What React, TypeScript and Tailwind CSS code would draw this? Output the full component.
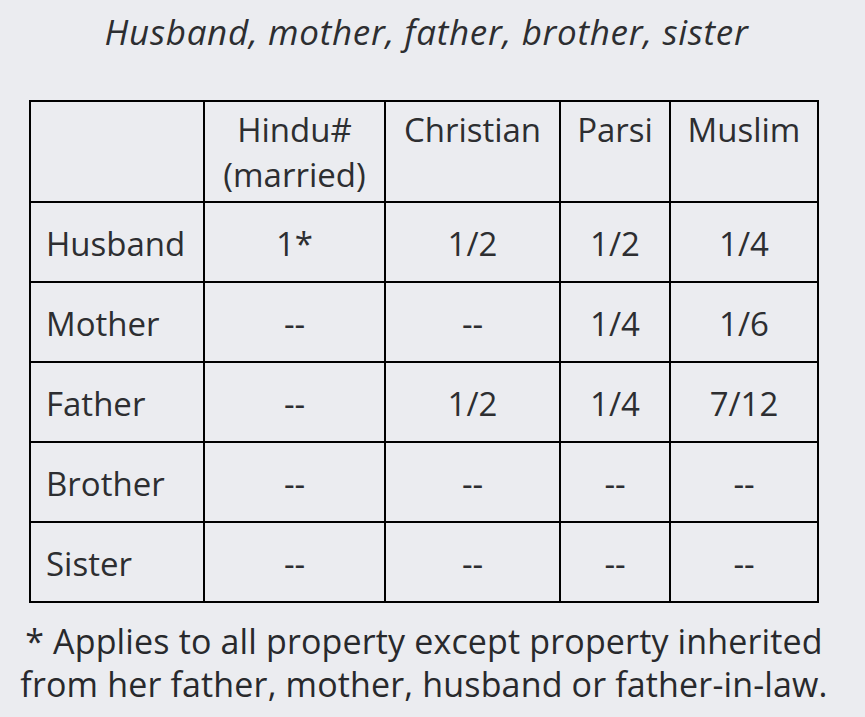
import React from "react";

const cols = ["w-[174px]", "w-[181px]", "w-[175px]", "w-[110px]", "w-[148px]"];

const rows: string[][] = [
  ["Husband", "1*", "1/2", "1/2", "1/4"],
  ["Mother", "--", "--", "1/4", "1/6"],
  ["Father", "--", "1/2", "1/4", "7/12"],
  ["Brother", "--", "--", "--", "--"],
  ["Sister", "--", "--", "--", "--"],
];

export default function App() {
  return (
    <div
      className="min-h-screen w-full bg-[#ebecf0] text-[#2d2e31]"
      style={{ fontFamily: '"Open Sans", "Noto Sans", sans-serif' }}
    >
      <div className="pt-[10px] text-center">
        <h1 className="ml-[-12px] text-[35px] leading-[44px] italic font-normal tracking-[0.7px]">
          Husband, mother, father, brother, sister
        </h1>
      </div>
      <div className="mt-[46px] ml-[29px] flex w-[790px] flex-col border-l-2 border-t-2 border-black text-[33px] leading-[45px]">
        <div className="flex h-[101px]">
          <div className={`${cols[0]} border-r-2 border-b-2 border-black`} />
          <div className={`${cols[1]} border-r-2 border-b-2 border-black pt-[5px] text-center`}>
            Hindu#
            <br />
            (married)
          </div>
          <div className={`${cols[2]} border-r-2 border-b-2 border-black pt-[5px] text-center`}>Christian</div>
          <div className={`${cols[3]} border-r-2 border-b-2 border-black pt-[5px] text-center`}>Parsi</div>
          <div className={`${cols[4]} border-r-2 border-b-2 border-black pt-[5px] text-center`}>Muslim</div>
        </div>
        {rows.map((r) => (
          <div key={r[0]} className="flex h-[80px]">
            {r.map((c, i) => (
              <div
                key={i}
                className={`${cols[i]} flex items-center border-r-2 border-b-2 border-black pt-[2px] ${
                  i === 0 ? "justify-start pl-[15px]" : "justify-center"
                }`}
              >
                {c}
              </div>
            ))}
          </div>
        ))}
      </div>
      <div className="mt-[17px] ml-[-17px] text-center text-[34px] leading-[43px] font-normal tracking-[0.15px] text-[#28292c]">
        * Applies to all property except property inherited
        <br />
        from her father, mother, husband or father-in-law.
      </div>
    </div>
  );
}
